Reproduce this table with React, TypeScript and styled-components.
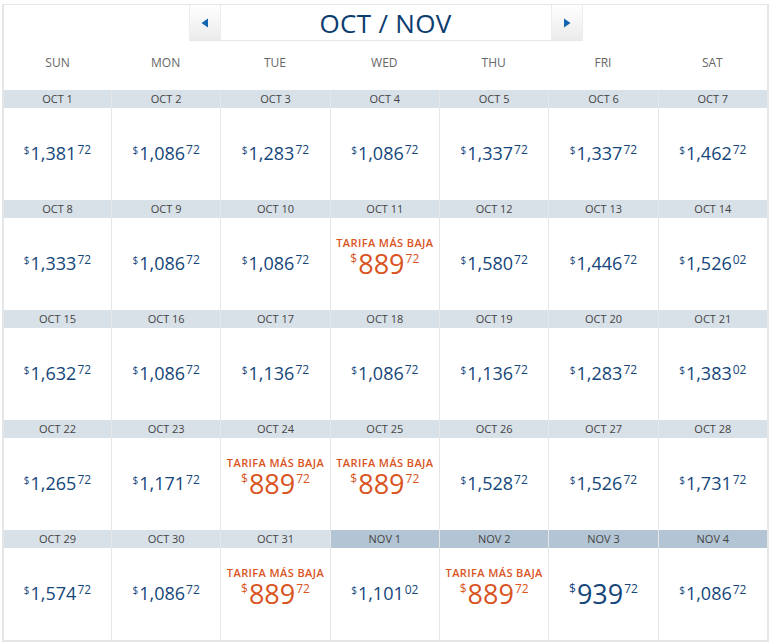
import React from "react";
import styled, { createGlobalStyle } from "styled-components";

const GlobalStyle = createGlobalStyle`
  body {
    margin: 0;
    background: #fff;
    font-family: "Open Sans", "Noto Sans", Arial, sans-serif;
  }
`;

const Frame = styled.div`
  box-sizing: border-box;
  width: 767px;
  margin: 4px 0 0 2px;
  border: 2px solid #e6e6e6;
  border-top-width: 1px;
  background: #fff;
`;

const Nav = styled.div`
  display: flex;
  width: 394px;
  height: 36px;
  margin: 0 auto;
  box-sizing: border-box;
  border-bottom: 1px solid #e8e8e8;
`;

const NavButton = styled.button`
  width: 32px;
  flex: none;
  display: flex;
  align-items: center;
  justify-content: center;
  padding: 0;
  border: none;
  border-left: 1px solid #ececec;
  border-right: 1px solid #ececec;
  background: linear-gradient(#ffffff, #ebebeb);
  cursor: pointer;
`;

const Title = styled.div`
  flex: 1;
  text-align: center;
  font-size: 26px;
  line-height: 36px;
  color: #0c3d70;
  letter-spacing: 0.3px;
`;

const Columns = styled.div`
  display: grid;
  grid-template-columns: 107px repeat(6, 1fr);
`;

const DayName = styled.div`
  height: 49px;
  box-sizing: border-box;
  padding-top: 15px;
  text-align: center;
  font-size: 12px;
  line-height: 14px;
  color: #666;
`;

const Cell = styled.div`
  display: flex;
  flex-direction: column;
  border-left: 1px solid #e6e6e6;
  &:nth-child(7n + 1) {
    border-left: none;
  }
`;

const DateBar = styled.div<{ $nextMonth: boolean }>`
  height: 18px;
  line-height: 18px;
  text-align: center;
  font-size: 11px;
  color: #444;
  background: ${(p) => (p.$nextMonth ? "#b3c5d4" : "#d8e0e8")};
`;

const Body = styled.div`
  height: 92px;
  display: grid;
  grid-template-rows: 1fr auto 1fr;
  justify-items: center;
`;

const Label = styled.div`
  align-self: end;
  margin-bottom: 4px;
  font-size: 11px;
  line-height: 11px;
  font-weight: 600;
  letter-spacing: 0.4px;
  color: #d9541f;
`;

const Price = styled.div<{ $low: boolean }>`
  grid-row: 2;
  display: flex;
  align-items: flex-start;
  margin-top: -2px;
  color: ${(p) => (p.$low ? "#d9541f" : "#15467a")};
`;

const Dollar = styled.span<{ $big: boolean }>`
  font-size: ${(p) => (p.$big ? "12px" : "10px")};
  line-height: 1;
  margin-top: ${(p) => (p.$big ? "3px" : "1px")};
  margin-right: 1px;
`;

const Amount = styled.span<{ $big: boolean }>`
  font-size: ${(p) => (p.$big ? "27px" : "18px")};
  line-height: 1;
`;

const Cents = styled.span<{ $big: boolean }>`
  font-size: 12px;
  line-height: 1;
  margin-top: ${(p) => (p.$big ? "3px" : "0")};
  margin-left: 1px;
`;

type Day = {
  date: string;
  amount: number;
  cents: string;
  low?: boolean;
};

const days: Day[] = [
  { date: "OCT 1", amount: 1381, cents: "72" },
  { date: "OCT 2", amount: 1086, cents: "72" },
  { date: "OCT 3", amount: 1283, cents: "72" },
  { date: "OCT 4", amount: 1086, cents: "72" },
  { date: "OCT 5", amount: 1337, cents: "72" },
  { date: "OCT 6", amount: 1337, cents: "72" },
  { date: "OCT 7", amount: 1462, cents: "72" },
  { date: "OCT 8", amount: 1333, cents: "72" },
  { date: "OCT 9", amount: 1086, cents: "72" },
  { date: "OCT 10", amount: 1086, cents: "72" },
  { date: "OCT 11", amount: 889, cents: "72", low: true },
  { date: "OCT 12", amount: 1580, cents: "72" },
  { date: "OCT 13", amount: 1446, cents: "72" },
  { date: "OCT 14", amount: 1526, cents: "02" },
  { date: "OCT 15", amount: 1632, cents: "72" },
  { date: "OCT 16", amount: 1086, cents: "72" },
  { date: "OCT 17", amount: 1136, cents: "72" },
  { date: "OCT 18", amount: 1086, cents: "72" },
  { date: "OCT 19", amount: 1136, cents: "72" },
  { date: "OCT 20", amount: 1283, cents: "72" },
  { date: "OCT 21", amount: 1383, cents: "02" },
  { date: "OCT 22", amount: 1265, cents: "72" },
  { date: "OCT 23", amount: 1171, cents: "72" },
  { date: "OCT 24", amount: 889, cents: "72", low: true },
  { date: "OCT 25", amount: 889, cents: "72", low: true },
  { date: "OCT 26", amount: 1528, cents: "72" },
  { date: "OCT 27", amount: 1526, cents: "72" },
  { date: "OCT 28", amount: 1731, cents: "72" },
  { date: "OCT 29", amount: 1574, cents: "72" },
  { date: "OCT 30", amount: 1086, cents: "72" },
  { date: "OCT 31", amount: 889, cents: "72", low: true },
  { date: "NOV 1", amount: 1101, cents: "02" },
  { date: "NOV 2", amount: 889, cents: "72", low: true },
  { date: "NOV 3", amount: 939, cents: "72" },
  { date: "NOV 4", amount: 1086, cents: "72" },
];

const weekDays = ["SUN", "MON", "TUE", "WED", "THU", "FRI", "SAT"];

const Arrow = ({ dir }: { dir: "left" | "right" }) => (
  <svg width="8" height="10" viewBox="0 0 8 10">
    <path d={dir === "left" ? "M7 0.5 L7 9.5 L0.5 5 Z" : "M1 0.5 L1 9.5 L7.5 5 Z"} fill="#1464b0" />
  </svg>
);

const App: React.FC = () => {
  return (
    <>
      <GlobalStyle />
      <Frame>
        <Nav>
          <NavButton aria-label="previous">
            <Arrow dir="left" />
          </NavButton>
          <Title>OCT / NOV</Title>
          <NavButton aria-label="next">
            <Arrow dir="right" />
          </NavButton>
        </Nav>
        <Columns>
          {weekDays.map((d) => (
            <DayName key={d}>{d}</DayName>
          ))}
        </Columns>
        <Columns>
          {days.map((d) => {
            const big = d.amount < 1000;
            return (
              <Cell key={d.date}>
                <DateBar $nextMonth={d.date.startsWith("NOV")}>{d.date}</DateBar>
                <Body>
                  {d.low && <Label>TARIFA MÁS BAJA</Label>}
                  <Price $low={!!d.low}>
                    <Dollar $big={big}>$</Dollar>
                    <Amount $big={big}>{d.amount.toLocaleString("en-US")}</Amount>
                    <Cents $big={big}>{d.cents}</Cents>
                  </Price>
                </Body>
              </Cell>
            );
          })}
        </Columns>
      </Frame>
    </>
  );
};

export default App;
